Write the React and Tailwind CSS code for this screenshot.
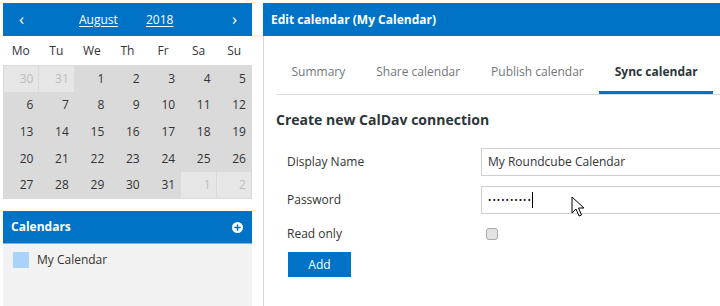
import { Plus } from 'lucide-react';

const weeks = [
    [[30, true], [31, true], [1], [2], [3], [4], [5]],
    [[6], [7], [8], [9], [10], [11], [12]],
    [[13], [14], [15], [16], [17], [18], [19]],
    [[20], [21], [22], [23], [24], [25], [26]],
    [[27], [28], [29], [30], [31], [1, true], [2, true]],
];

const tabs = ['Summary', 'Share calendar', 'Publish calendar', 'Sync calendar'];

export default function App() {
    return (
        <div className="relative w-[720px] h-[306px] overflow-hidden bg-white pt-[3px] pl-[3px] flex font-['Open_Sans',sans-serif] text-[#2c363a]">
            {/* Left column */}
            <div className="w-[249px] flex flex-col shrink-0">
                {/* Datepicker header */}
                <div className="h-[33px] bg-[#0073c6] text-white text-[12px] relative flex items-center">
                    <span className="absolute left-[16px] text-[17px] leading-none -mt-[2px]">‹</span>
                    <span className="absolute left-[76px] underline underline-offset-2">August</span>
                    <span className="absolute left-[143px] underline underline-offset-2">2018</span>
                    <span className="absolute left-[229px] text-[17px] leading-none -mt-[2px]">›</span>
                </div>
                {/* Weekdays */}
                <div className="h-[29px] grid grid-cols-7 items-center text-[12px] text-[#333]">
                    {['Mo', 'Tu', 'We', 'Th', 'Fr', 'Sa', 'Su'].map((d) => (
                        <div key={d} className="text-center">{d}</div>
                    ))}
                </div>
                {/* Days */}
                <div className="h-[134px] bg-[#dadada] p-px grid grid-cols-7 grid-rows-5 gap-px text-[12px]">
                    {weeks.flat().map(([n, other], i) => (
                        <div
                            key={i}
                            className={`flex items-center justify-end pr-[5px] ${other ? 'bg-[#e6e6e6] text-[#bdbdbd]' : 'text-[#333]'}`}
                        >
                            {n}
                        </div>
                    ))}
                </div>
                {/* Calendars list */}
                <div className="mt-[12px] flex-1 flex flex-col bg-[#f2f2f2]">
                    <div className="h-[33px] bg-[#0073c6] border-b border-[#7fb3dd] flex items-center justify-between pl-[8px] pr-[9px] text-white text-[12px] font-bold">
                        <span>Calendars</span>
                        <span className="w-[11px] h-[11px] rounded-full bg-white flex items-center justify-center">
                            <Plus className="w-[9px] h-[9px] text-[#0073c6]" strokeWidth={4} />
                        </span>
                    </div>
                    <div className="flex items-center h-[32px] pl-[10px] text-[12px] text-[#333]">
                        <span className="w-[16px] h-[16px] bg-[#a8d4fb] mr-[8px]" />
                        My Calendar
                    </div>
                </div>
            </div>

            {/* Right column */}
            <div className="ml-[11px] flex-1 flex flex-col">
                <div className="h-[33px] bg-[#0073c6] flex items-center pl-[8px] text-white text-[12px] font-bold">
                    Edit calendar (My Calendar)
                </div>
                <div className="flex-1 border-l border-[#d6d6d6] pl-[12px]">
                    {/* Tabs */}
                    <div className="mt-[16px] flex border-b border-[#dcdcdc] text-[12px]">
                        {tabs.map((t) => {
                            const active = t === 'Sync calendar';
                            return (
                                <div
                                    key={t}
                                    className={`h-[42px] px-[15.5px] flex items-center border-b-[3px] ${active ? 'border-[#0073c6] font-bold text-[#2c363a]' : 'border-transparent text-[#737677]'}`}
                                >
                                    {t}
                                </div>
                            );
                        })}
                    </div>

                    <h2 className="mt-[14px] text-[14px] font-bold leading-[22px]">Create new CalDav connection</h2>

                    {/* Form */}
                    <div className="mt-[17px] text-[12px] text-[#333]">
                        <div className="flex items-center h-[28px]">
                            <span className="w-[194px] pl-[11px] shrink-0 box-content">Display Name</span>
                            <div className="w-[300px] h-[28px] border border-[#cfcfcf] flex items-center pl-[6px]">
                                My Roundcube Calendar
                            </div>
                        </div>
                        <div className="flex items-center h-[28px] mt-[10px]">
                            <span className="w-[194px] pl-[11px] shrink-0 box-content">Password</span>
                            <div className="w-[300px] h-[28px] border border-[#cfcfcf] flex items-center pl-[6px]">
                                <span className="text-[9px] tracking-[1px] text-[#111]">••••••••••</span>
                                <span className="w-px h-[16px] bg-black" />
                            </div>
                        </div>
                        <div className="flex items-center h-[20px] mt-[10px]">
                            <span className="w-[194px] pl-[11px] shrink-0 box-content">Read only</span>
                            <span className="ml-[5px] w-[12px] h-[12px] rounded-[3px] border border-[#a9a9a9] bg-[#e3e3e3]" />
                        </div>
                        <button className="mt-[8px] ml-[12px] w-[63px] h-[25px] bg-[#0073c6] text-white text-[12px]">
                            Add
                        </button>
                    </div>
                </div>
            </div>

            {/* Mouse pointer */}
            <svg className="absolute left-[571px] top-[196px]" width="14" height="22" viewBox="0 0 14 22">
                <path d="M1 1 L1 17 L5 13 L8 20 L10.5 19 L7.5 12 L13 12 Z" fill="white" stroke="black" strokeWidth="1" strokeLinejoin="round" />
            </svg>
        </div>
    );
}
